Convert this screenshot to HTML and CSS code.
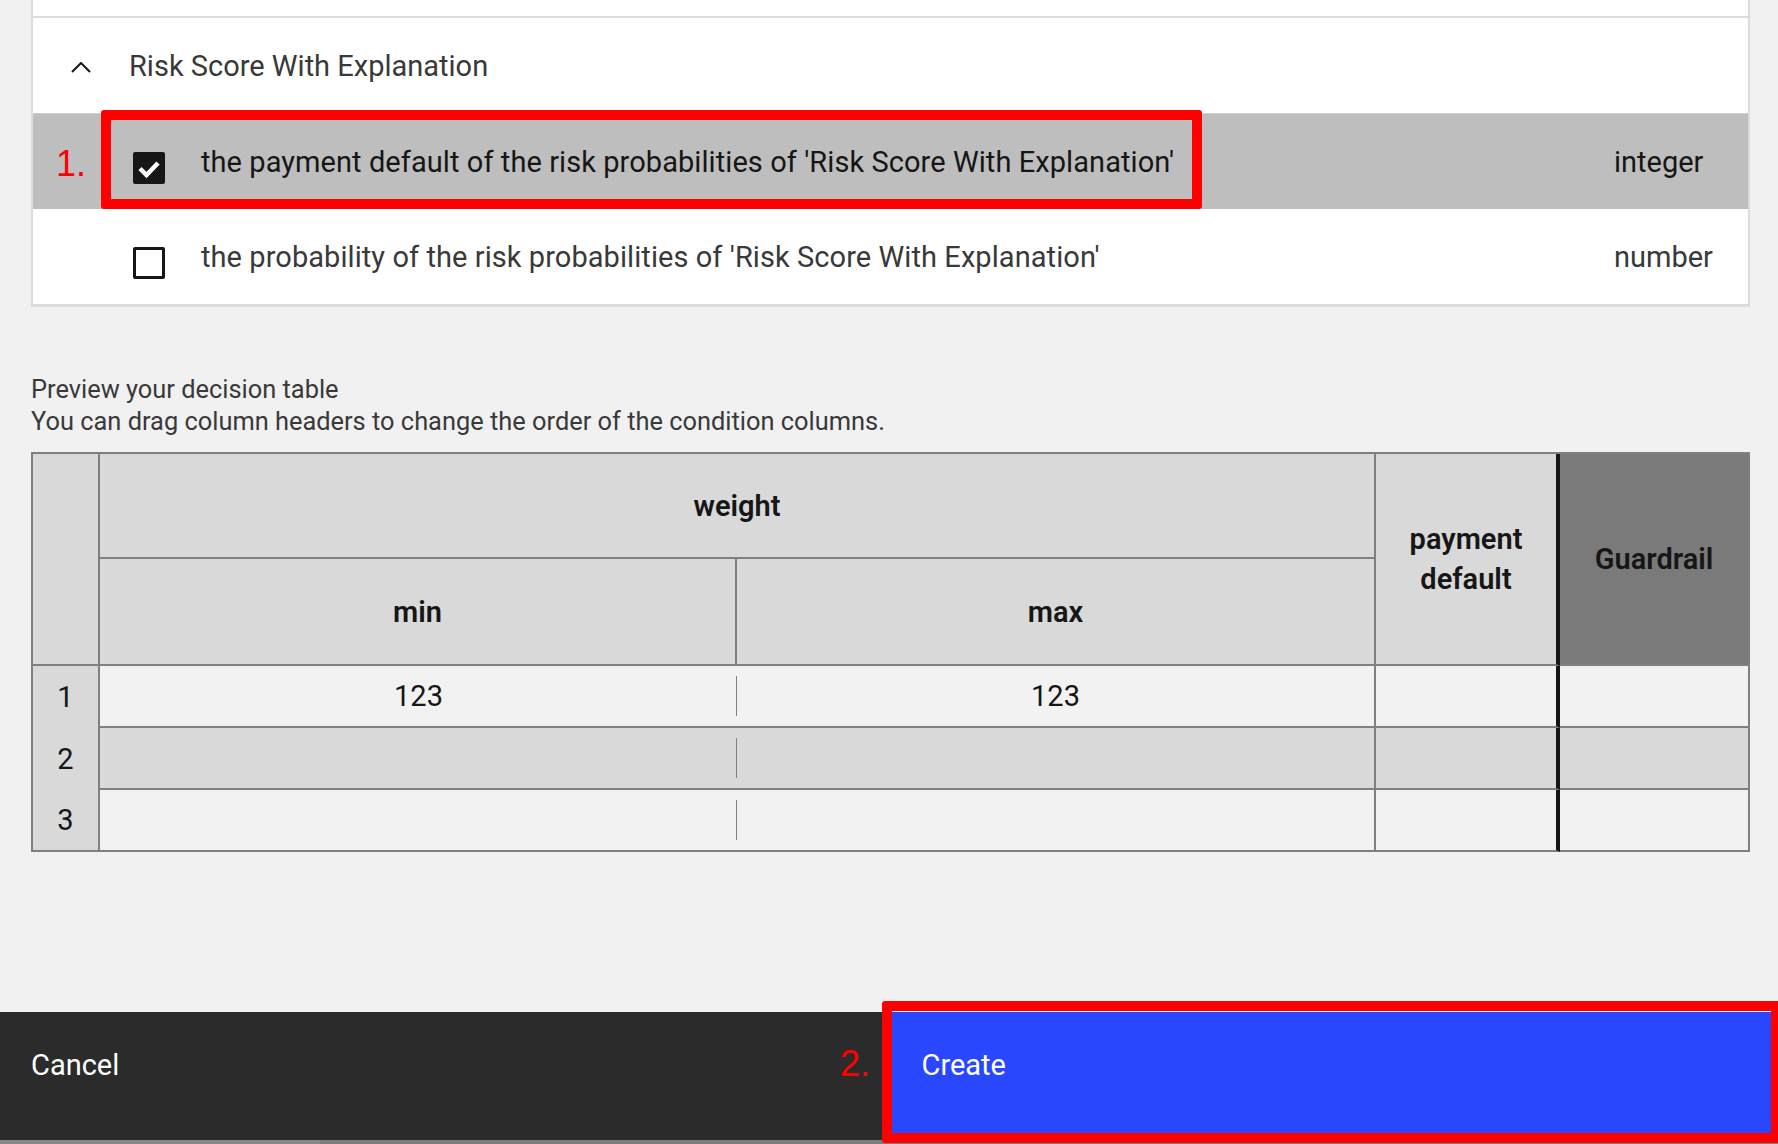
FILE: index.html
```html
<!DOCTYPE html>
<html lang="en">
<head>
<meta charset="utf-8">
<title>Decision table</title>
<link rel="stylesheet" href="styles.css">
</head>
<body>
<div class="page">
  <main class="main">
    <section class="panel">
      <div class="group">
        <div class="group-header">
          <svg class="chevron" viewBox="0 0 20 11" aria-hidden="true"><polyline points="1,10 10,1 19,10" fill="none" stroke="#161616" stroke-width="2"/></svg>
          <span class="group-title">Risk Score With Explanation</span>
        </div>
        <div class="row row-selected">
          <span class="checkbox checked"><svg viewBox="0 0 32 32" aria-hidden="true"><polyline points="7,16.5 13.5,23 25,11" fill="none" stroke="#fff" stroke-width="4.5"/></svg></span>
          <span class="row-label">the payment default of the risk probabilities of 'Risk Score With Explanation'</span>
          <span class="row-type">integer</span>
        </div>
        <div class="row row-last">
          <span class="checkbox"></span>
          <span class="row-label muted">the probability of the risk probabilities of 'Risk Score With Explanation'</span>
          <span class="row-type muted">number</span>
        </div>
      </div>
    </section>

    <div class="preview-text">
      <p>Preview your decision table</p>
      <p>You can drag column headers to change the order of the condition columns.</p>
    </div>

    <div class="dt">
      <div class="c h rn-head"></div>
      <div class="c h weight">weight</div>
      <div class="c h payment">payment<br>default</div>
      <div class="c h guardrail">Guardrail</div>
      <div class="c h mm">min</div>
      <div class="c h mm">max</div>

      <div class="c rn">1</div>
      <div class="c b light min-cell">123</div>
      <div class="c b light">123</div>
      <div class="c b light pay-cell"></div>
      <div class="c b light"></div>

      <div class="c rn">2</div>
      <div class="c b dark min-cell"></div>
      <div class="c b dark"></div>
      <div class="c b dark pay-cell"></div>
      <div class="c b dark"></div>

      <div class="c rn rn-last">3</div>
      <div class="c b light min-cell"></div>
      <div class="c b light"></div>
      <div class="c b light pay-cell"></div>
      <div class="c b light"></div>
    </div>
  </main>

  <footer class="footer">
    <div class="footer-buttons">
      <button class="btn btn-secondary" type="button">Cancel</button>
      <button class="btn btn-primary" type="button">Create</button>
    </div>
    <div class="scrollbar"><div class="thumb"></div></div>
  </footer>

  <span class="annot annot-1">1.</span>
  <div class="hl hl-1"></div>
  <span class="annot annot-2">2.</span>
  <div class="hl hl-2"></div>
</div>
</body>
</html>
```

FILE: styles.css
```css
html, body {
  margin: 0;
  padding: 0;
}

body {
  background: #f1f1f1;
  font-family: Roboto, "Liberation Sans", Arial, sans-serif;
  color: #161616;
  width: 1778px;
  height: 1144px;
  overflow: hidden;
}

.page {
  position: relative;
  height: 1144px;
  display: flex;
  flex-direction: column;
}

.main {
  flex: 1;
}

/* ---------- attribute panel ---------- */
.panel {
  margin-left: 31px;
  width: 1719px;
  box-sizing: border-box;
  background: #fff;
  border-left: 2px solid #dcdcdc;
  border-right: 2px solid #dcdcdc;
  border-bottom: 3px solid #dcdcdc;
  padding-top: 16px;
}

.group {
  border-top: 2px solid #dcdcdc;
}

.group-header {
  height: 95px;
  display: flex;
  align-items: center;
}

.chevron {
  width: 20px;
  height: 11px;
  margin-left: 38px;
  margin-right: 38px;
  margin-top: 3px;
}

.group-title {
  font-size: 29px;
  color: #393939;
}

.row {
  height: 96px;
  display: flex;
  align-items: center;
  box-sizing: border-box;
}

.row-selected {
  background: #bebebe;
  border-top: 1px solid #cfcfcf;
}

.row-last {
  height: 95px;
}

.checkbox {
  width: 32px;
  height: 32px;
  box-sizing: border-box;
  margin-left: 100px;
  margin-top: 12px;
  border: 3px solid #161616;
  border-radius: 2px;
  background: #fff;
  flex-shrink: 0;
  display: flex;
}

.checkbox.checked {
  background: #161616;
  border: none;
}

.checkbox svg {
  width: 32px;
  height: 32px;
}

.row-label {
  margin-left: 36px;
  flex: 1;
  font-size: 29px;
  letter-spacing: 0.07px;
  color: #161616;
}

.row-type {
  width: 134px;
  font-size: 29px;
  color: #161616;
}

.muted {
  color: #393939;
}

/* ---------- preview text ---------- */
.preview-text {
  margin: 66px 0 0 31px;
  font-size: 25.4px;
  line-height: 32px;
  color: #393939;
}

.preview-text p {
  margin: 0;
}

/* ---------- decision table ---------- */
.dt {
  margin: 15px 0 0 31px;
  width: fit-content;
  display: grid;
  grid-template-columns: 67px 637px 639px 184px 190px;
  grid-template-rows: 105px 107px 62px 62px 62px;
  border-left: 2px solid #808080;
  border-top: 2px solid #808080;
}

.c {
  position: relative;
  box-sizing: border-box;
  border-right: 2px solid #808080;
  border-bottom: 2px solid #808080;
  background: #d9d9d9;
  display: flex;
  align-items: center;
  justify-content: center;
  text-align: center;
  font-size: 29px;
  color: #161616;
}

.h {
  font-weight: 600;
}

.rn-head {
  grid-column: 1;
  grid-row: 1 / span 2;
}

.weight {
  grid-column: 2 / span 2;
  grid-row: 1;
}

.payment {
  grid-column: 4;
  grid-row: 1 / span 2;
  line-height: 40px;
  border-right: 4px solid #161616;
}

.guardrail {
  grid-column: 5;
  grid-row: 1 / span 2;
  background: #7a7a7a;
}

.rn {
  border-bottom: none;
}

.rn-last {
  border-bottom: 2px solid #808080;
}

.light {
  background: #f2f2f2;
}

.dark {
  background: #d9d9d9;
}

.min-cell {
  border-right: none;
}

.min-cell::after {
  content: "";
  position: absolute;
  right: -1px;
  top: 10px;
  width: 2px;
  height: 40px;
  background: #808080;
}

.pay-cell {
  border-right: 4px solid #161616;
}

/* ---------- footer ---------- */
.footer {
  height: 132px;
}

.footer-buttons {
  display: flex;
  height: 128px;
}

.btn {
  flex: 1;
  margin: 0;
  border: none;
  border-radius: 0;
  padding: 33px 31px 0;
  text-align: left;
  display: flex;
  align-items: flex-start;
  font-family: Roboto, "Liberation Sans", Arial, sans-serif;
  font-size: 29px;
  line-height: 40px;
  color: #fff;
  cursor: pointer;
}

.btn-secondary {
  background: #2b2b2b;
}

.btn-primary {
  background: #2947ff;
  padding-left: 34px;
}

.scrollbar {
  height: 4px;
  background: #7d7d7d;
}

.thumb {
  width: 320px;
  height: 4px;
  background: #888888;
}

/* ---------- annotations ---------- */
.annot {
  position: absolute;
  color: #ff0000;
  font-family: "Liberation Sans", Arial, sans-serif;
  font-size: 36px;
  line-height: 1;
}

.annot-1 {
  left: 56px;
  top: 146px;
}

.annot-2 {
  left: 840px;
  top: 1046px;
}

.hl {
  position: absolute;
  box-sizing: border-box;
  border: 10px solid #ff0000;
  border-radius: 3px;
}

.hl-1 {
  left: 101px;
  top: 110px;
  width: 1101px;
  height: 99px;
}

.hl-2 {
  left: 882px;
  top: 1001px;
  width: 899px;
  height: 142px;
}
```
